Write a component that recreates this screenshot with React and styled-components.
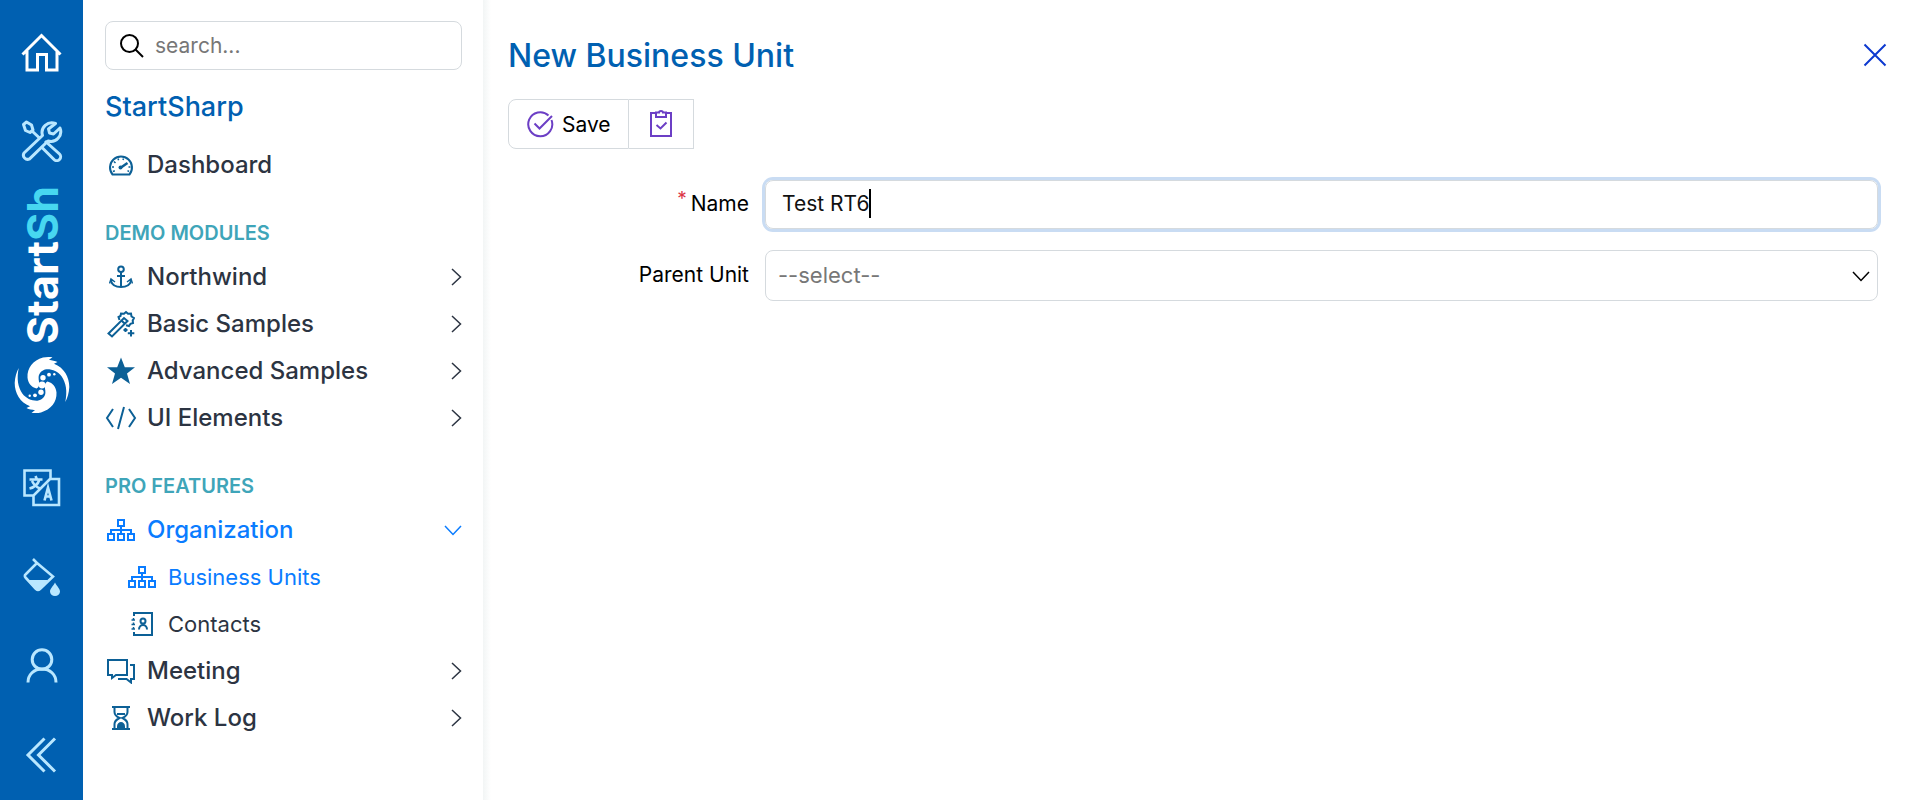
import React, { useState } from "react";
import styled, { createGlobalStyle } from "styled-components";

const color = {
  rail: "#0060b1",
  railIcon: "#b9e7ff",
  cyan: "#47d7f0",
  brand: "#0060b1",
  section: "#3fa5b9",
  text: "#2c3442",
  icon: "#0c6096",
  active: "#0a7cff",
  border: "#d5dade",
  purple: "#6c3fc5",
};

const GlobalStyle = createGlobalStyle`
  * { box-sizing: border-box; }
  body { margin: 0; background: #fff; }
  body, button, input, select { font-family: "Inter", "Open Sans", sans-serif; }
  a { text-decoration: none; color: inherit; }
  ul { list-style: none; margin: 0; padding: 0; }
`;

const Page = styled.div`
  display: flex;
  min-height: 100vh;
`;

/* ---------- icon rail ---------- */

const Rail = styled.nav`
  flex: 0 0 83px;
  display: flex;
  flex-direction: column;
  align-items: center;
  gap: 23px;
  padding: 30px 0 23px;
  background: ${color.rail};
  color: ${color.railIcon};
`;

const RailGroup = styled.div`
  display: flex;
  flex-direction: column;
  align-items: center;
  gap: 45px;
`;

const RailButton = styled.button`
  display: grid;
  place-items: center;
  width: 44px;
  height: 44px;
  padding: 0;
  border: 0;
  background: none;
  color: ${(p) => (p.$active ? "#fff" : "inherit")};
  cursor: pointer;
`;

const Logo = styled.a`
  flex: 1;
  display: flex;
  flex-direction: column;
  align-items: center;
  gap: 12px;
`;

const LogoText = styled.span`
  writing-mode: vertical-rl;
  transform: rotate(180deg);
  color: #fff;
  font-size: 43px;
  font-weight: 700;
  line-height: 44px;
`;

const LogoAccent = styled.span`
  color: ${color.cyan};
`;

/* ---------- sidebar ---------- */

const Sidebar = styled.aside`
  flex: 0 0 400px;
  min-width: 0;
  padding: 21px 21px 21px 22px;
`;

const SearchBox = styled.label`
  display: flex;
  align-items: center;
  gap: 10px;
  height: 49px;
  padding: 0 13px;
  border: 1px solid ${color.border};
  border-radius: 8px;
`;

const SearchInput = styled.input`
  flex: 1;
  min-width: 0;
  padding: 0;
  border: 0;
  outline: 0;
  background: none;
  font-size: 21px;
  &::placeholder { color: #777; opacity: 1; }
`;

const Brand = styled.h1`
  margin: 18px 0 0;
  color: ${color.brand};
  font-size: 27px;
  font-weight: 500;
  line-height: 38px;
`;

const Section = styled.section`
  padding-top: ${(p) => (p.$first ? 15 : 25)}px;
`;

const SectionTitle = styled.h2`
  margin: 0;
  color: ${color.section};
  font-size: 20px;
  font-weight: 600;
  line-height: 40px;
`;

const Item = styled.a`
  display: flex;
  align-items: center;
  gap: 10px;
  height: 47px;
  padding-left: ${(p) => (p.$sub ? 21 : 0)}px;
  color: ${(p) => (p.$active ? color.active : color.text)};
  font-size: ${(p) => (p.$sub ? 22 : 24)}px;
  font-weight: ${(p) => (p.$sub ? 400 : 500)};
`;

const ItemIcon = styled.span`
  display: grid;
  place-items: center;
  flex: 0 0 32px;
  color: ${(p) => (p.$active ? color.active : color.icon)};
`;

const ItemLabel = styled.span`
  flex: 1;
`;

/* ---------- main ---------- */

const Main = styled.main`
  flex: 1;
  min-width: 0;
  padding: 31px 31px 31px 25px;
  background: linear-gradient(to right, #f2f5f5, #fff 8px);
`;

const Header = styled.header`
  display: flex;
  align-items: center;
  justify-content: space-between;
  height: 48px;
`;

const Title = styled.h2`
  margin: 0;
  color: ${color.brand};
  font-size: 32px;
  font-weight: 500;
`;

const CloseButton = styled.button`
  display: grid;
  place-items: center;
  width: 28px;
  height: 28px;
  padding: 0;
  border: 0;
  background: none;
  color: #0c39d0;
  cursor: pointer;
`;

const Toolbar = styled.div`
  display: flex;
  margin-top: 20px;
`;

const ToolButton = styled.button`
  display: flex;
  align-items: center;
  justify-content: center;
  gap: 8px;
  min-width: 65px;
  height: 50px;
  padding: 0 17px;
  border: 1px solid ${color.border};
  border-radius: ${(p) => (p.$first ? "8px 0 0 8px" : "0")};
  border-left-width: ${(p) => (p.$first ? 1 : 0)}px;
  background: #fff;
  color: #000;
  font-size: 21px;
  cursor: pointer;
  svg { color: ${color.purple}; }
`;

const Form = styled.form`
  display: grid;
  grid-template-columns: 241px 1fr;
  column-gap: 16px;
  row-gap: 21px;
  align-items: center;
  margin-top: 31px;
  padding-right: 11px;
`;

const FieldLabel = styled.label`
  display: flex;
  justify-content: flex-end;
  gap: 4px;
  padding-bottom: 2px;
  font-size: 21px;
`;

const Required = styled.sup`
  color: #dc3545;
  font-size: 19px;
  line-height: 16px;
`;

const TextField = styled.div`
  display: flex;
  align-items: center;
  height: 49px;
  padding: 0 16px 2px;
  border: 1px solid ${color.border};
  border-radius: 8px;
  box-shadow: 0 0 0 3px #c9dcf3;
  cursor: text;
`;

const TextInput = styled.input`
  field-sizing: content;
  min-width: 2px;
  max-width: 100%;
  padding: 0;
  border: 0;
  outline: 0;
  background: none;
  color: #111;
  font-size: 21px;
  caret-color: transparent;
`;

const Caret = styled.span`
  width: 2px;
  height: 29px;
  background: #000;
`;

const SelectWrap = styled.div`
  display: grid;
  align-items: center;
  & > * { grid-area: 1 / 1; }
  svg { justify-self: end; margin-right: 8px; pointer-events: none; }
`;

const Select = styled.select`
  appearance: none;
  width: 100%;
  height: 51px;
  padding: 0 40px 2px 12px;
  border: 1px solid ${color.border};
  border-radius: 8px;
  background: #fff;
  color: #777;
  font-size: 22px;
`;

/* ---------- icons ---------- */

const Svg = ({ w, h, s = 2, children }) => (
  <svg
    width={w}
    height={h}
    viewBox={`0 0 ${w} ${h}`}
    fill="none"
    stroke="currentColor"
    strokeWidth={s}
    aria-hidden="true"
  >
    {children}
  </svg>
);

const HomeIcon = () => (
  <Svg w={42} h={40} s={3}>
    <path d="M1.5 22.5 20.5 3.500 39.500 22.500M6 19v19h10.500V22.500h9V38H36V19" />
  </Svg>
);

const ToolsIcon = () => (
  <Svg w={42} h={42} s={3}>
    <path d="M2.500 4.500 5.500 2l5 3 1.500 5-3 2.500-4.500-2zM10.500 10.500l8 7.500" strokeLinejoin="round" />
    <path d="M24 21 38.500 34a3.800 3.800 0 0 1-5.500 5.500L20 26.500" />
    <path d="M34.500 3.500a9.800 9.800 0 0 0-13 12L3 33a4.200 4.200 0 0 0 5.600 5.800L27 21a9.800 9.800 0 0 0 12-13l-6.500 6-4-1-1-4z" strokeLinejoin="round" />
  </Svg>
);

const SwirlArm = ({ transform }) => (
  <g transform={transform}>
    <path d="M22.500 32.500C17 31 14 27 13.500 21.500 13 12 19 4.500 29 1.600 32 .8 35.500 .8 38.500 1.300L35 3.700C38 4.500 41 4.500 43.500 6L40 7.700C50 11.500 55.300 21 55.300 31 55 37 53.500 42 51.300 46 53.500 35 52 27 47.700 20.500 44 15.500 38 13 32.500 13.300 28 14 25 17 24.600 21 24.300 24 25.800 27 25 29.500 24.500 31 23.700 32 22.500 32.500Z" />
    <circle cx="29" cy="21.700" r="2.700" />
    <circle cx="35" cy="18.700" r="1.900" />
    <circle cx="40.300" cy="18.300" r="1.200" />
  </g>
);

const SwirlIcon = () => (
  <svg width="56" height="58" viewBox="0 0 56 58" fill="#fff" aria-hidden="true">
    <SwirlArm />
    <SwirlArm transform="rotate(180 28 29)" />
    <circle cx="28" cy="29" r="3.400" />
  </svg>
);

const TranslateIcon = () => (
  <Svg w={38} h={38} s={2.600}>
    <path d="M10 26.500H1.500V1.500h26V10H36v26H10.500V26.500L27 10" />
    <path d="M6.500 10.500h13M12.500 7l1.500 3.500M16.500 10.500C15 15 11 18.500 6.500 19.500M9 12c2 4 4.500 6 8 7.500" />
    <path d="M21.500 31.500 25 18.500l3.500 13M23 27.500h4.500" />
  </Svg>
);

const FillIcon = () => (
  <Svg w={38} h={38} s={2.600}>
    <path d="M10 1l4 4L2.500 16.500a2 2 0 0 0 0 3L13 31a3 3 0 0 0 4 0l13-12.500L14 5" />
    <path d="M5 22h20l-8.500 9a2 2 0 0 1-3 0z" fill="currentColor" stroke="none" />
    <path d="M32 24.500c2 4 5 6 5 9a5 4.500 0 0 1-10 0c0-3 3-5 5-9z" fill="currentColor" stroke="none" />
  </Svg>
);

const UserIcon = () => (
  <Svg w={32} h={36} s={3}>
    <circle cx="16" cy="11.500" r="9.800" />
    <path d="M2 34.500c0-8 6-13.500 14-13.500s14 5.500 14 13.500" />
  </Svg>
);

const CollapseIcon = () => (
  <Svg w={34} h={36} s={3}>
    <path d="M19.500 1.500 3 18l16.500 16.500M30 1.500 13.500 18 30 34.500" />
  </Svg>
);

const SearchIcon = () => (
  <Svg w={26} h={26}>
    <circle cx="10.500" cy="10.500" r="8.500" />
    <path d="M16.500 16.500 24 24" />
  </Svg>
);

const DashboardIcon = () => (
  <Svg w={26} h={22}>
    <path d="M4.500 20.500a11 11 0 1 1 17 0z" strokeLinejoin="round" />
    <path d="M13 13.500 19.500 9" strokeWidth="2.500" />
    <circle cx="12.500" cy="13.500" r="2" fill="currentColor" stroke="none" />
    <path d="M4 13h2M6 7.500l1.500 1.500M10 4.500l.6 1.800M15.500 4.500 15 6M20.500 13h2M5 17.500l1.800-.8M21 17.500l-1.500-.8" strokeWidth="1.500" />
  </Svg>
);

const AnchorIcon = () => (
  <Svg w={24} h={24}>
    <circle cx="12" cy="4.200" r="2.800" />
    <path d="M12 7v15.500M8 11h8M2 16c1 4 4.500 6 10 6s9-2 10-6" />
    <path d="M.5 18.500 2 14l4 3M23.500 18.500 22 14l-4 3" strokeWidth="1.500" />
  </Svg>
);

const WandIcon = () => (
  <Svg w={28} h={28}>
    <path d="M1.500 23.500 17 8l3.500 3L5 26.500zM14.500 10.500l3.500 3.500" />
    <path d="M12.500 10 11.500 7l2-1 .5-2.500 3 .3L19 2l2 1.800 3-.3.500 3L27 8l-1.300 2.500L26 13l-2.500.8L22 16l-3-.8" />
    <path d="M18.500 18v4M16.500 20h4M24 20v6.500M20.800 23.300h6.500" />
  </Svg>
);

const StarIcon = () => (
  <Svg w={28} h={28}>
    <path d="M14 .5 17.800 10.300H28L20 16.500 23 27 14 20.800 5 27 8 16.500 0 10.300h10.200z" fill="currentColor" stroke="none" />
  </Svg>
);

const CodeIcon = () => (
  <Svg w={32} h={24}>
    <path d="M8 3 2 12l6 9M24 3l6 9-6 9M19 1l-6 22" />
  </Svg>
);

const OrgIcon = () => (
  <Svg w={28} h={24}>
    <path d="M11 2h6v6h-6zM1 16h6v6H1zM11 16h6v6h-6zM21 16h6v6h-6zM14 8v8M4 16v-4h20v4" />
  </Svg>
);

const ContactsIcon = () => (
  <Svg w={24} h={26}>
    <path d="M4 5V2h18v22H4v-3" />
    <path d="M3.500 7v2.500M3.500 11.500V14M3.500 16v2.500M1.500 9H5M1.500 13.500H5M1.500 18H5" strokeWidth="1.500" />
    <circle cx="13" cy="10" r="2.500" />
    <path d="M9 18.500c0-6 8-6 8 0" />
  </Svg>
);

const MeetingIcon = () => (
  <Svg w={28} h={26}>
    <path d="M1 2h19v15h-11L5 20v-3H1zM23 7h4v14h-3v3.500L19.500 21H11" />
  </Svg>
);

const HourglassIcon = () => (
  <Svg w={20} h={26}>
    <path d="M1 2h18M1 24h18M3.500 2v5c0 3 3 5 5 6-2 1-5 3-5 6v5M16.500 2v5c0 3-3 5-5 6 2 1 5 3 5 6v5M6 9h8" />
    <path d="M6 24v-2.500c0-6 8-6 8 0V24z" fill="currentColor" stroke="none" />
  </Svg>
);

const ChevronRight = () => (
  <Svg w={12} h={18} s={1.500}>
    <path d="M2 1 10.500 9 2 17" />
  </Svg>
);

const ChevronDown = () => (
  <Svg w={18} h={12} s={1.500}>
    <path d="M1 2 9 10.500l8-8.500" />
  </Svg>
);

const SaveIcon = () => (
  <Svg w={28} h={28}>
    <path d="M22.500 5.500A12 12 0 1 0 25.500 10M8.500 13.500l5 5L26 6" />
  </Svg>
);

const ApplyIcon = () => (
  <Svg w={24} h={28}>
    <path d="M7 3H2v23h20V3h-5M7 2.500h3c0-2 4-2 4 0h3V7H7zM7.500 15l4 3.500 6-6" />
  </Svg>
);

const CloseIcon = () => (
  <Svg w={24} h={24}>
    <path d="M1.500 1.500 22.500 22.500M22.500 1.500 1.500 22.500" />
  </Svg>
);

/* ---------- data ---------- */

const sections = [
  {
    title: "DEMO MODULES",
    items: [
      { label: "Northwind", Icon: AnchorIcon, Arrow: ChevronRight },
      { label: "Basic Samples", Icon: WandIcon, Arrow: ChevronRight },
      { label: "Advanced Samples", Icon: StarIcon, Arrow: ChevronRight },
      { label: "UI Elements", Icon: CodeIcon, Arrow: ChevronRight },
    ],
  },
  {
    title: "PRO FEATURES",
    items: [
      { label: "Organization", Icon: OrgIcon, Arrow: ChevronDown, active: true },
      { label: "Business Units", Icon: OrgIcon, active: true, sub: true },
      { label: "Contacts", Icon: ContactsIcon, sub: true },
      { label: "Meeting", Icon: MeetingIcon, Arrow: ChevronRight },
      { label: "Work Log", Icon: HourglassIcon, Arrow: ChevronRight },
    ],
  },
];

const MenuItem = ({ label, Icon, Arrow, active, sub }) => (
  <Item href="#" $active={active} $sub={sub}>
    <ItemIcon $active={active}>
      <Icon />
    </ItemIcon>
    <ItemLabel>{label}</ItemLabel>
    {Arrow && <Arrow />}
  </Item>
);

export default function App() {
  const [name, setName] = useState("Test RT6");

  return (
    <Page>
      <GlobalStyle />
      <Rail>
        <RailGroup>
          <RailButton $active aria-label="Home"><HomeIcon /></RailButton>
          <RailButton aria-label="Tools"><ToolsIcon /></RailButton>
        </RailGroup>
        <Logo href="#">
          <LogoText>
            Start<LogoAccent>Sh</LogoAccent>
          </LogoText>
          <SwirlIcon />
        </Logo>
        <RailGroup>
          <RailButton aria-label="Language"><TranslateIcon /></RailButton>
          <RailButton aria-label="Theme"><FillIcon /></RailButton>
          <RailButton aria-label="Account"><UserIcon /></RailButton>
          <RailButton aria-label="Collapse"><CollapseIcon /></RailButton>
        </RailGroup>
      </Rail>

      <Sidebar>
        <SearchBox>
          <SearchIcon />
          <SearchInput type="search" placeholder="search..." aria-label="Search" />
        </SearchBox>
        <Brand>StartSharp</Brand>
        <Section $first>
          <MenuItem label="Dashboard" Icon={DashboardIcon} />
        </Section>
        {sections.map((s) => (
          <Section key={s.title}>
            <SectionTitle>{s.title}</SectionTitle>
            <ul>
              {s.items.map((item) => (
                <li key={item.label}><MenuItem {...item} /></li>
              ))}
            </ul>
          </Section>
        ))}
      </Sidebar>

      <Main>
        <Header>
          <Title>New Business Unit</Title>
          <CloseButton aria-label="Close"><CloseIcon /></CloseButton>
        </Header>
        <Toolbar>
          <ToolButton $first><SaveIcon />Save</ToolButton>
          <ToolButton aria-label="Apply changes"><ApplyIcon /></ToolButton>
        </Toolbar>
        <Form>
          <FieldLabel htmlFor="unit-name">
            <Required>*</Required>Name
          </FieldLabel>
          <TextField>
            <TextInput id="unit-name" value={name} onChange={(e) => setName(e.target.value)} />
            <Caret />
          </TextField>
          <FieldLabel htmlFor="parent-unit">Parent Unit</FieldLabel>
          <SelectWrap>
            <Select id="parent-unit" defaultValue="">
              <option value="">--select--</option>
            </Select>
            <ChevronDown />
          </SelectWrap>
        </Form>
      </Main>
    </Page>
  );
}
